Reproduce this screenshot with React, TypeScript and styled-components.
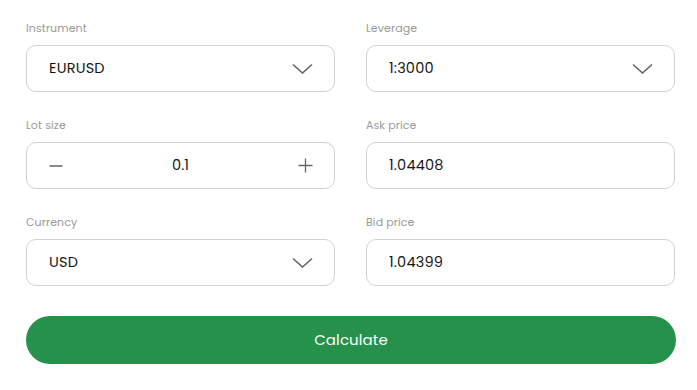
import React from "react";
import styled, { createGlobalStyle } from "styled-components";

const Global = createGlobalStyle`
  html, body { margin: 0; padding: 0; background: #ffffff; }
  body { font-family: Poppins, Inter, "Noto Sans", sans-serif; }
  * { box-sizing: border-box; }
`;

const Page = styled.div`
  padding: 20px 22px 0 26px;
  width: 697px;
`;

const Grid = styled.div`
  display: grid;
  grid-template-columns: 309px 309px;
  column-gap: 31px;
  row-gap: 25px;
`;

const Field = styled.div`
  display: flex;
  flex-direction: column;
`;

const Label = styled.div`
  font-size: 11px;
  line-height: 16px;
  color: #9a9a9a;
  margin-bottom: 9px;
  letter-spacing: 0.1px;
`;

const Box = styled.div`
  height: 47px;
  border: 1px solid #d2d2d2;
  border-radius: 10px;
  display: flex;
  align-items: center;
  justify-content: space-between;
  padding: 0 21px 0 22px;
  font-size: 14.5px;
  color: #161616;
  background: #fff;
`;

const Value = styled.span`
  font-size: 14.5px;
  letter-spacing: 0.2px;
`;

const StepValue = styled.span`
  flex: 1;
  text-align: center;
  font-size: 14.5px;
`;

const IconSlot = styled.span`
  display: flex;
  align-items: center;
  color: #666;
`;

const Button = styled.button`
  margin-top: 30px;
  width: 650px;
  height: 48px;
  border: none;
  border-radius: 24px;
  background: #25914b;
  color: #ffffff;
  font-family: inherit;
  font-size: 15px;
  line-height: 46px;
  letter-spacing: 0.1px;
  cursor: pointer;
`;

const Chevron = () => (
  <IconSlot>
    <svg width="21" height="11" viewBox="0 0 21 11" fill="none">
      <path d="M1 1.5 L10.5 10 L20 1.5" stroke="#666" strokeWidth="1.6" />
    </svg>
  </IconSlot>
);

const Minus = () => (
  <IconSlot>
    <svg width="14" height="14" viewBox="0 0 14 14" fill="none">
      <path d="M0.5 7 H13.5" stroke="#666" strokeWidth="1.5" />
    </svg>
  </IconSlot>
);

const Plus = () => (
  <IconSlot>
    <svg width="15" height="15" viewBox="0 0 15 15" fill="none">
      <path d="M0.5 7.5 H14.5 M7.5 0.5 V14.5" stroke="#666" strokeWidth="1.3" />
    </svg>
  </IconSlot>
);

const SelectField = ({ label, value }: { label: string; value: string }) => (
  <Field>
    <Label>{label}</Label>
    <Box>
      <Value>{value}</Value>
      <Chevron />
    </Box>
  </Field>
);

const TextField = ({ label, value }: { label: string; value: string }) => (
  <Field>
    <Label>{label}</Label>
    <Box>
      <Value>{value}</Value>
    </Box>
  </Field>
);

export default function App() {
  return (
    <>
      <Global />
      <Page>
        <Grid>
          <SelectField label="Instrument" value="EURUSD" />
          <SelectField label="Leverage" value="1:3000" />
          <Field>
            <Label>Lot size</Label>
            <Box>
              <Minus />
              <StepValue>0.1</StepValue>
              <Plus />
            </Box>
          </Field>
          <TextField label="Ask price" value="1.04408" />
          <SelectField label="Currency" value="USD" />
          <TextField label="Bid price" value="1.04399" />
        </Grid>
        <Button>Calculate</Button>
      </Page>
    </>
  );
}
